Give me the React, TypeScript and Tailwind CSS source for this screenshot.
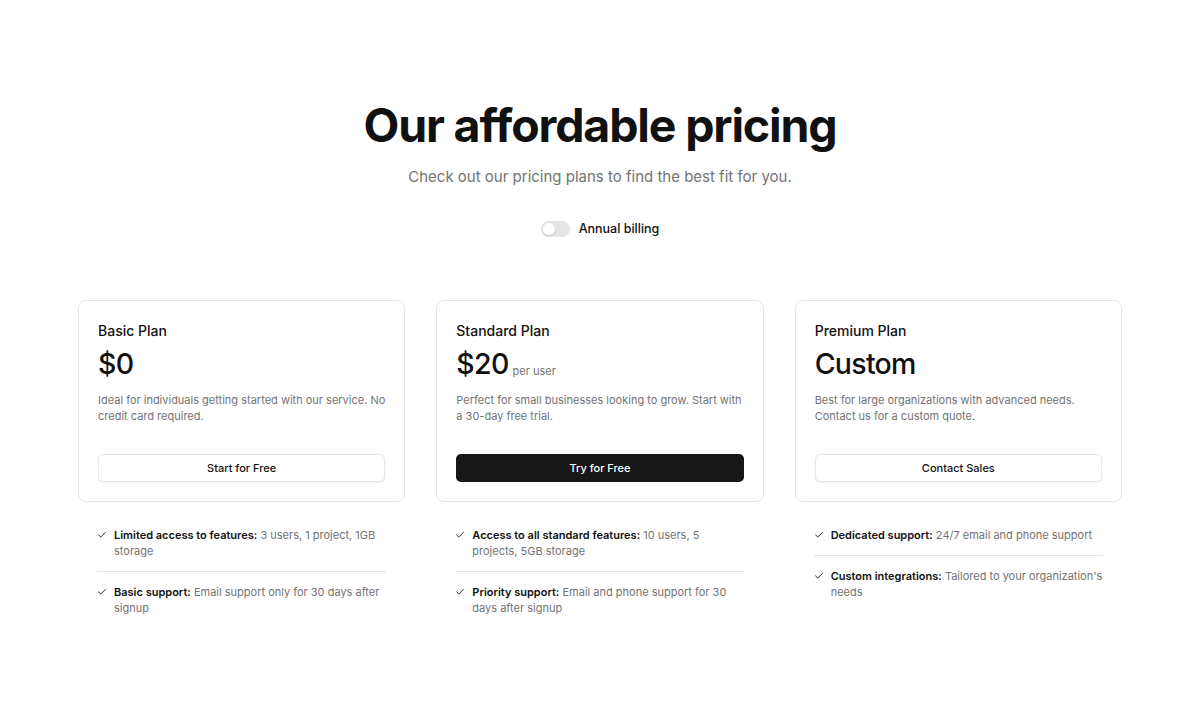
import React, { useState } from 'react'
import { Check } from 'lucide-react'

type Feature = { title: string; text: string }

type Plan = {
  name: string
  price: string
  unit?: string
  description: string
  cta: string
  primary?: boolean
  features: Feature[]
}

const plans: Plan[] = [
  {
    name: 'Basic Plan',
    price: '$0',
    description:
      'Ideal for individuals getting started with our service. No credit card required.',
    cta: 'Start for Free',
    features: [
      { title: 'Limited access to features:', text: '3 users, 1 project, 1GB storage' },
      { title: 'Basic support:', text: 'Email support only for 30 days after signup' },
    ],
  },
  {
    name: 'Standard Plan',
    price: '$20',
    unit: 'per user',
    description:
      'Perfect for small businesses looking to grow. Start with a 30-day free trial.',
    cta: 'Try for Free',
    primary: true,
    features: [
      { title: 'Access to all standard features:', text: '10 users, 5 projects, 5GB storage' },
      { title: 'Priority support:', text: 'Email and phone support for 30 days after signup' },
    ],
  },
  {
    name: 'Premium Plan',
    price: 'Custom',
    description:
      'Best for large organizations with advanced needs. Contact us for a custom quote.',
    cta: 'Contact Sales',
    features: [
      { title: 'Dedicated support:', text: '24/7 email and phone support' },
      { title: 'Custom integrations:', text: "Tailored to your organization's needs" },
    ],
  },
]

function PlanColumn({ plan }: { plan: Plan }) {
  return (
    <div className="flex flex-col">
      {/* Card */}
      <div className="rounded-lg border border-neutral-200 bg-white px-[19px] pt-[20px] pb-[19px]">
        <h3 className="text-[14px] leading-5 font-medium text-[#111]">{plan.name}</h3>
        <div className="mt-[5px] flex items-end gap-1">
          <span className="text-[28.5px] leading-9 font-medium tracking-tight text-[#111]">
            {plan.price}
          </span>
          {plan.unit && (
            <span className="mb-[3px] text-[11px] leading-4 text-neutral-500">{plan.unit}</span>
          )}
        </div>
        <p className="mt-[10px] min-h-8 text-[11px] leading-4 text-neutral-500">
          {plan.description}
        </p>
        <button
          className={
            plan.primary
              ? 'mt-[30px] h-[28px] w-full rounded-[5px] bg-[#171717] text-[11px] font-medium text-white'
              : 'mt-[30px] h-[28px] w-full rounded-[5px] border border-neutral-200 bg-white text-[11px] font-medium text-[#111] shadow-xs'
          }
        >
          {plan.cta}
        </button>
      </div>

      {/* Features */}
      <ul className="mt-[25px] divide-y divide-neutral-200 px-[19px]">
        {plan.features.map((f) => (
          <li key={f.title} className="flex gap-[7px] py-[12px] first:pt-0">
            <Check className="mt-[3px] h-[10px] w-[10px] shrink-0 text-[#111]" strokeWidth={2.2} />
            <p className="text-[11px] leading-4 text-neutral-500">
              <span className="font-semibold text-[#111]">{f.title}</span> {f.text}
            </p>
          </li>
        ))}
      </ul>
    </div>
  )
}

export default function App() {
  const [annual, setAnnual] = useState(false)

  return (
    <div className="min-h-[715px] bg-white font-['Inter',sans-serif] text-[#111]">
      <div className="mx-auto max-w-[1044px] pt-[97px]">
        <div className="text-center">
          <h1 className="text-[46.5px] leading-[56px] font-bold tracking-[-0.025em]">
            Our affordable pricing
          </h1>
          <p className="mt-[12px] text-[15px] leading-6 text-neutral-500">
            Check out our pricing plans to find the best fit for you.
          </p>

          {/* Billing toggle */}
          <div className="mt-[30px] flex h-5 items-center justify-center gap-[9px]">
            <button
              onClick={() => setAnnual(!annual)}
              className={
                annual
                  ? 'flex h-[16px] w-[29px] items-center rounded-full bg-[#171717] p-[2px]'
                  : 'flex h-[16px] w-[29px] items-center rounded-full bg-neutral-200 p-[2px]'
              }
            >
              <span
                className={
                  annual
                    ? 'h-[12px] w-[12px] translate-x-[13px] rounded-full bg-white shadow-sm'
                    : 'h-[12px] w-[12px] rounded-full bg-white shadow-sm'
                }
              />
            </button>
            <span className="text-[12.5px] font-medium">Annual billing</span>
          </div>
        </div>

        <div className="mt-[61px] grid grid-cols-3 gap-[31px]">
          {plans.map((p) => (
            <PlanColumn key={p.name} plan={p} />
          ))}
        </div>
      </div>
    </div>
  )
}
